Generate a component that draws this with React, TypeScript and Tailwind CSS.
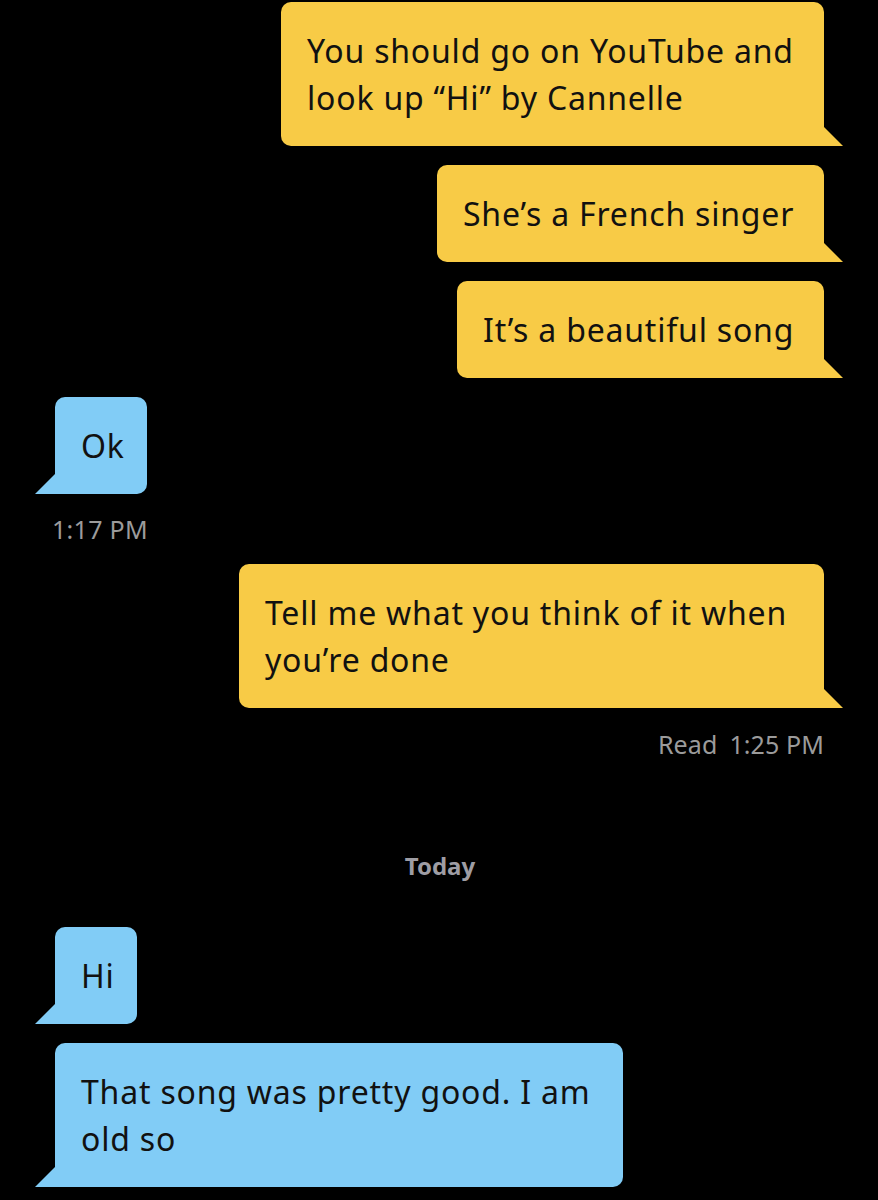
import React from 'react';

type Msg = {
  text: string;
  width: string;
};

const Outgoing: React.FC<Msg> = ({ text, width }) => (
  <div className={`relative self-end ${width} bg-[#F8CB46] rounded-[10px] rounded-br-none px-[26px] py-[25px] text-[32px] leading-[47px] tracking-[0.8px] text-[#111]`}>
    {text}
    {/* tail */}
    <span className="absolute bottom-0 -right-[19px] w-[19px] h-[19px] bg-[#F8CB46] [clip-path:polygon(0_0,0_100%,100%_100%)]" />
  </div>
);

const Incoming: React.FC<Msg> = ({ text, width }) => (
  <div className={`relative self-start ${width} bg-[#81CCF6] rounded-[10px] rounded-bl-none px-[26px] py-[25px] text-[32px] leading-[47px] tracking-[0.8px] text-[#111]`}>
    {text}
    <span className="absolute bottom-0 -left-[20px] w-[20px] h-[20px] bg-[#81CCF6] [clip-path:polygon(100%_0,100%_100%,0_100%)]" />
  </div>
);

export default function App() {
  return (
    <div
      className="w-[878px] h-[1200px] bg-black overflow-hidden flex flex-col pl-[55px] pr-[54px] pt-[2px]"
      style={{ fontFamily: '"Noto Sans", "Open Sans", sans-serif' }}
    >
      <div className="flex flex-col gap-[19px]">
        <Outgoing text="You should go on YouTube and look up “Hi” by Cannelle" width="w-[543px]" />
        <Outgoing text="She’s a French singer" width="w-[387px]" />
        <Outgoing text="It’s a beautiful song" width="w-[367px]" />
        <Incoming text="Ok" width="w-[92px]" />
      </div>

      <div className="mt-[20px] -ml-[3px] text-[25px] leading-[30px] tracking-[0.3px] text-[#9b9b9b]">1:17 PM</div>

      <div className="mt-[20px] flex flex-col">
        <Outgoing text="Tell me what you think of it when you’re done" width="w-[585px]" />
      </div>

      <div className="mt-[21px] self-end text-[25px] leading-[30px] tracking-[0.1px] text-[#9b9b9b]">
        Read<span className="inline-block w-[12px]" />1:25 PM
      </div>

      <div className="mt-[92px] self-center pl-[1px] text-[24px] leading-[30px] font-bold text-[#9e9da4]">Today</div>

      <div className="mt-[46px] flex flex-col gap-[19px]">
        <Incoming text="Hi" width="w-[82px]" />
        <Incoming text="That song was pretty good. I am old so" width="w-[568px]" />
      </div>
    </div>
  );
}
